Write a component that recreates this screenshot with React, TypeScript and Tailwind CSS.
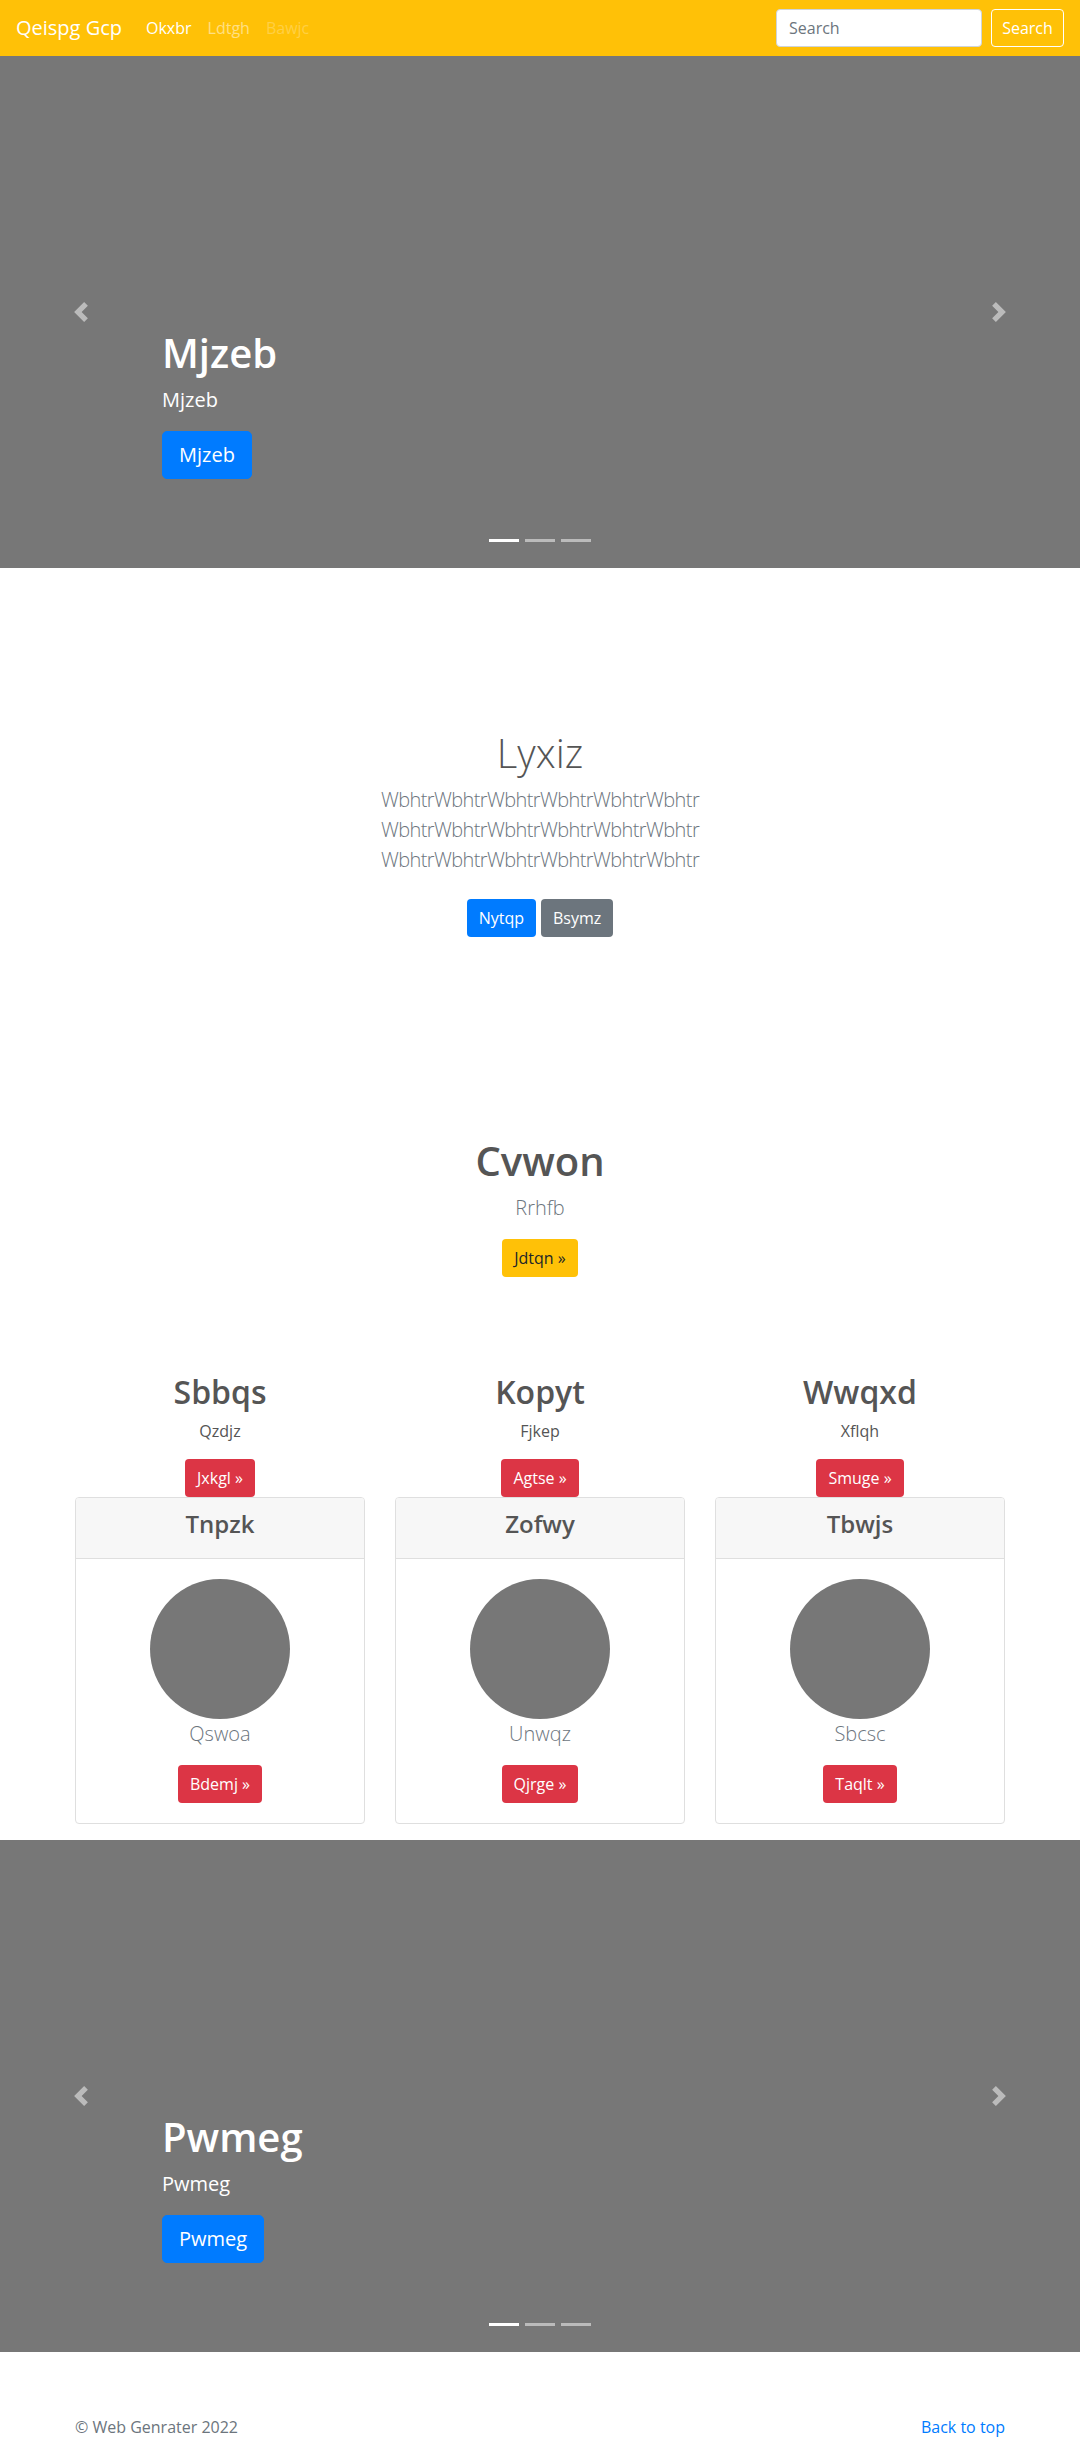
import React from "react";

function Chevron({ dir }: { dir: "prev" | "next" }) {
  return (
    <svg viewBox="0 0 8 8" className="w-5 h-5" fill="#fff">
      {dir === "prev" ? (
        <path d="M5.25 0l-4 4 4 4 1.5-1.5-2.5-2.5 2.5-2.5-1.5-1.5z" />
      ) : (
        <path d="M2.75 0l-1.5 1.5 2.5 2.5-2.5 2.5 1.5 1.5 4-4-4-4z" />
      )}
    </svg>
  );
}

function Carousel({ title }: { title: string }) {
  return (
    <div className="relative h-[512px] bg-[#777777] overflow-hidden">
      <div className="pt-[273px] pl-[162px]">
        <h1 className="text-[40px] leading-[48px] font-semibold text-white mb-2">{title}</h1>
        <p className="text-[20px] leading-[30px] text-white mb-[16px]">{title}</p>
        <a className="inline-block bg-[#007bff] border border-[#007bff] text-white text-[20px] leading-[30px] px-4 py-2 rounded-[5px]">
          {title}
        </a>
      </div>

      <span className="absolute left-0 top-0 bottom-0 w-[162px] flex items-center justify-center opacity-50">
        <Chevron dir="prev" />
      </span>
      <span className="absolute right-0 top-0 bottom-0 w-[162px] flex items-center justify-center opacity-50">
        <Chevron dir="next" />
      </span>

      <div className="absolute left-0 right-0 bottom-[26px] flex justify-center gap-[6px]">
        <span className="w-[30px] h-[3px] bg-white" />
        <span className="w-[30px] h-[3px] bg-white/50" />
        <span className="w-[30px] h-[3px] bg-white/50" />
      </div>
    </div>
  );
}

const features = [
  { title: "Sbbqs", sub: "Qzdjz", btn: "Jxkgl", card: "Tnpzk", text: "Qswoa", cardBtn: "Bdemj" },
  { title: "Kopyt", sub: "Fjkep", btn: "Agtse", card: "Zofwy", text: "Unwqz", cardBtn: "Qjrge" },
  { title: "Wwqxd", sub: "Xflqh", btn: "Smuge", card: "Tbwjs", text: "Sbcsc", cardBtn: "Taqlt" },
];

export default function App() {
  return (
    <div className="font-['Open_Sans','Noto_Sans',sans-serif] bg-white text-[#212529]">
      {/* navbar */}
      <nav className="h-14 bg-[#ffc107] flex items-center px-4">
        <span className="text-[20px] leading-[30px] text-white mr-4">Qeispg Gcp</span>
        <div className="flex text-base leading-6">
          <a className="px-2 text-white">Okxbr</a>
          <a className="px-2 text-white/50">Ldtgh</a>
          <a className="px-2 text-white/25">Bawjc</a>
        </div>
        <form className="ml-auto flex items-center gap-[9px]">
          <input
            type="text"
            placeholder="Search"
            className="w-[206px] h-[38px] bg-white border border-[#ced4da] rounded-[4px] px-3 text-base placeholder:text-[#6c757d]"
          />
          <button className="w-[73px] h-[38px] border border-white rounded-[4px] text-white text-base">
            Search
          </button>
        </form>
      </nav>

      <Carousel title="Mjzeb" />

      {/* jumbotron */}
      <section className="pt-[161px] text-center">
        <h1 className="text-[40px] leading-[48px] font-light text-[#555] mb-2">Lyxiz</h1>
        <p className="text-[20px] leading-[30px] font-light tracking-[-0.6px] text-[#6c757d] mb-4">
          WbhtrWbhtrWbhtrWbhtrWbhtrWbhtr
          <br />
          WbhtrWbhtrWbhtrWbhtrWbhtrWbhtr
          <br />
          WbhtrWbhtrWbhtrWbhtrWbhtrWbhtr
        </p>
        <div className="flex justify-center gap-[5px] py-2">
          <a className="h-[38px] px-3 flex items-center bg-[#007bff] text-white text-base rounded-[4px]">Nytqp</a>
          <a className="h-[38px] px-3 flex items-center bg-[#6c757d] text-white text-base rounded-[4px]">Bsymz</a>
        </div>
      </section>

      {/* call out */}
      <section className="mt-[192px] text-center flex flex-col items-center">
        <h1 className="text-[40px] leading-[48px] font-semibold text-[#555] mb-2">Cvwon</h1>
        <p className="text-[20px] leading-[30px] font-light text-[#6c757d] mb-4">Rrhfb</p>
        <a className="h-[38px] px-3 flex items-center bg-[#ffc107] text-[#212529] text-base rounded-[4px]">
          Jdtqn »
        </a>
      </section>

      {/* three columns */}
      <section className="mt-[96px] px-[75px] grid grid-cols-3 gap-[30px]">
        {features.map((f) => (
          <div key={f.title} className="flex flex-col items-center text-center">
            <h2 className="text-[32px] leading-[38px] font-semibold text-[#555] mb-2">{f.title}</h2>
            <p className="text-base leading-6 text-[#555] mb-4">{f.sub}</p>
            <a className="h-[38px] px-3 flex items-center bg-[#dc3545] text-white text-base rounded-[4px]">
              {f.btn} »
            </a>
            <div className="w-full border border-[#dfdfdf] rounded-[4px] overflow-hidden">
              <div className="bg-[#f7f7f7] border-b border-[#dfdfdf] px-5 py-3">
                <h4 className="text-[24px] leading-[28px] font-semibold text-[#555] mb-2">{f.card}</h4>
              </div>
              <div className="p-5 flex flex-col items-center">
                <div className="w-[140px] h-[140px] rounded-full bg-[#777777]" />
                <p className="text-[20px] leading-[30px] font-light text-[#6c757d] mb-4">{f.text}</p>
                <a className="h-[38px] px-3 flex items-center bg-[#dc3545] text-white text-base rounded-[4px]">
                  {f.cardBtn} »
                </a>
              </div>
            </div>
          </div>
        ))}
      </section>

      <div className="mt-4">
        <Carousel title="Pwmeg" />
      </div>

      {/* footer */}
      <footer className="pt-[63px] px-[75px] flex justify-between text-base leading-6">
        <p className="text-[#6c757d]">© Web Genrater 2022</p>
        <a className="text-[#007bff]">Back to top</a>
      </footer>
    </div>
  );
}
